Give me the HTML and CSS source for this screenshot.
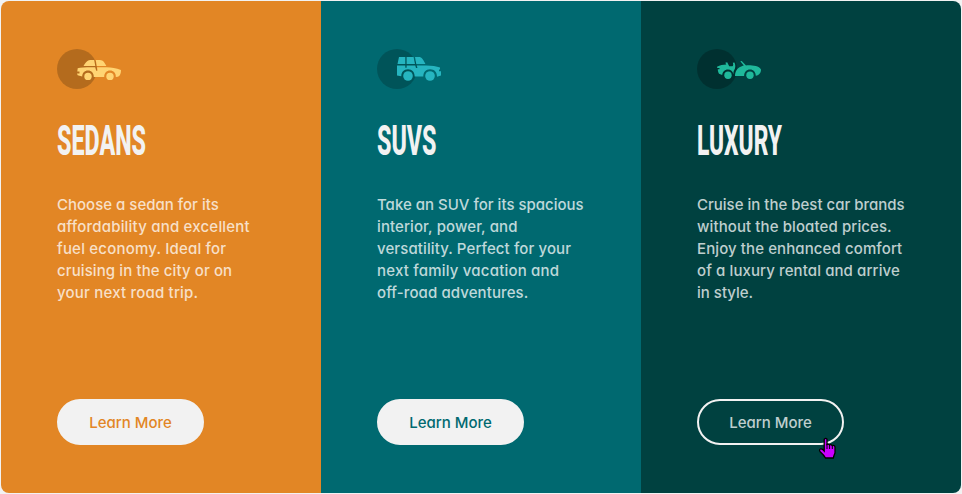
FILE: index.html
```html
<!DOCTYPE html>
<html lang="en">
<head>
<meta charset="utf-8">
<title>Car categories</title>
<link rel="stylesheet" href="styles.css">
</head>
<body>
<main class="cards">
  <section class="card sedans">
    <svg class="icon" width="64" height="40" viewBox="0 0 64 40">
      <circle cx="20" cy="20" r="20" fill="#000" fill-opacity=".2"/>
      <g fill="#ffd473">
        <path d="M26.5 17C28 14.5 30 11.8 31.8 11.3C33.7 10.8 36 11 37.2 11.1L38.3 17ZM38.8 11H43C46.2 11.1 47.7 13.6 49.3 17H39.7Z"/>
        <path d="M20.7 19.3C24 18.4 30 18.2 38.2 18.3L39.2 21.8H40.5L40 18.3H49.7C54.6 18.6 59 19 64 21C64 24 63.4 26.7 61 27.7L58.8 28C59 23.9 56.5 21.5 53 21.5S47.2 24 47.2 28H36.8C36.8 24 34.5 21.5 31 21.5S25.2 24 25.2 27.6L20.7 26.3L20 24.4H22.5V22.4H20.3Z"/>
        <circle cx="31" cy="27.4" r="3.7"/><circle cx="53" cy="27.4" r="3.7"/>
      </g>
    </svg>
    <h2 class="title"><svg width="91" height="48"><text x="0" y="39" textLength="89" lengthAdjust="spacingAndGlyphs">SEDANS</text></svg></h2>
    <p class="copy"><span class="tight">Choose a sedan for its</span> <span class="loose">affordability and excellent</span> <span class="loose">fuel economy. Ideal for</span> <span>cruising in the city or on</span> <span class="loose">your next road trip.</span></p>
    <a class="button">Learn More</a>
  </section>
  <section class="card suvs">
    <svg class="icon" width="64" height="40" viewBox="0 0 64 40">
      <circle cx="20" cy="20" r="20" fill="#000" fill-opacity=".2"/>
      <g fill="#26b5c0">
        <path d="M22 8H28.3V15H20.5ZM29.6 8H36.6L38 15H29.6ZM38 8H42.5C45 8.2 47 12 48.4 15H39.3Z"/>
        <path d="M20 16.4H28.3V18.7H29.6V16.4H38.3L39 19H40.5L39.8 16.4H49C55 16.5 59.5 17.2 63 18.6V20.5H62V22.2H64V26.5L60 27.8C60 23 57.3 20.3 53 20.3S46.4 23.3 46.3 27.5H37.7C37.6 23.3 35.3 20.3 31 20.3S24.3 23.3 24.3 27.3L20 26.5Z"/>
        <circle cx="31" cy="27" r="4.8"/><circle cx="53" cy="27" r="4.8"/>
      </g>
    </svg>
    <h2 class="title"><svg width="91" height="48"><text x="0" y="39" textLength="59.5" lengthAdjust="spacingAndGlyphs">SUVS</text></svg></h2>
    <p class="copy"><span class="tight">Take an SUV for its spacious</span> <span>interior, power, and</span> <span>versatility. Perfect for your</span> <span class="loose">next family vacation and</span> <span>off-road adventures.</span></p>
    <a class="button">Learn More</a>
  </section>
  <section class="card luxury">
    <svg class="icon" width="64" height="40" viewBox="0 0 64 40">
      <circle cx="20" cy="20" r="20" fill="#000" fill-opacity=".25"/>
      <g fill="#1fb99b">
        <path d="M20 17.8C23 16.3 26 15.6 29.3 15.5L28.3 13.8L30.2 13.3L32.2 17.2H35.5C36.6 16.4 36.2 14.8 35.8 13.7L37.5 13.5C38.8 16.7 38.5 19 37 21.6C36.2 23 36.5 24 36.5 25.3C35.7 22.5 33.8 20.5 31 20.5C27.4 20.5 25.5 23 25.2 26L22 24.7C21.1 23 20.8 21.3 20.8 20.2H22.5V19H20.3Z"/>
        <path d="M43.3 12.3L44.7 12L49 16.4C55 16.2 61.8 16.7 64 20.5C64 24 62.5 25.8 58.8 26.8C58.7 23 56.5 20.5 53 20.5S47.2 23 47.1 27H38C38 23.3 39.7 19.6 42.5 18.2C44 17.4 45.7 16.9 46.8 16.5Z"/>
        <circle cx="31" cy="26.3" r="3.7"/><circle cx="53" cy="26.3" r="3.7"/>
      </g>
    </svg>
    <h2 class="title"><svg width="91" height="48"><text x="0" y="39" textLength="85" lengthAdjust="spacingAndGlyphs">LUXURY</text></svg></h2>
    <p class="copy"><span class="tight">Cruise in the best car brands</span> <span>without the bloated prices.</span> <span>Enjoy the enhanced comfort</span> <span>of a luxury rental and arrive</span> <span class="tight">in style.</span></p>
    <a class="button active">Learn More
      <svg class="cursor" width="20" height="24" viewBox="0 0 20 24"><path d="M6.2 2.2Q7.7 .5 9 2.2V7.4Q10.5 6.5 11.5 8Q13 7 14.2 8.6Q16.7 8 17 10V16Q16 18 15.3 21H7.5Q5.8 18 2.4 15Q.7 12.8 2.3 12Q4 11.3 6.2 14Z" fill="#c800ff" stroke="#000" stroke-width="1.3"/><path d="M9 7V12M11.6 8V12M14.3 9V12" stroke="#000" fill="none"/></svg>
    </a>
  </section>
</main>
</body>
</html>
```
FILE: styles.css
```css
* { box-sizing: border-box; }
body {
  margin: 0;
  padding: 1px;
  background: #f2f2f2;
  font-family: Inter, "Liberation Sans", sans-serif;
}
.cards {
  display: grid;
  grid-template-columns: repeat(3, minmax(0, 1fr));
  height: 492px;
  border-radius: 8px;
  overflow: hidden;
}
.card {
  display: flex;
  flex-direction: column;
  align-items: flex-start;
  padding: 48px 56px;
}
.sedans { background: #e28625; color: #e28625; }
.suvs { background: #006970; color: #006970; }
.luxury { background: #004140; color: #004140; }
.icon { display: block; flex: none; }
.title { margin: 27px 0 0; height: 48px; }
.title svg { display: block; overflow: visible; }
.title text {
  fill: #f2f2f2;
  font: 800 42px Roboto, sans-serif;
}
.copy {
  margin: 30px 0 0;
  font-size: 15px;
  font-weight: 450;
  line-height: 22px;
  letter-spacing: .1px;
  color: rgba(255, 255, 255, .75);
  font-feature-settings: "cv11";
  white-space: nowrap;
}
.copy span { display: block; width: max-content; }
.copy .loose { letter-spacing: .2px; }
.copy .tight { letter-spacing: 0; }
.button {
  position: relative;
  display: flex;
  align-items: center;
  justify-content: center;
  width: 147px;
  height: 46px;
  margin-top: auto;
  border: 2px solid #f2f2f2;
  border-radius: 23px;
  background: #f2f2f2;
  font-size: 15px;
  font-weight: 450;
  font-feature-settings: "cv11";
}
.active { background: transparent; color: rgba(255, 255, 255, .75); }
.cursor { position: absolute; left: 119px; top: 36px; }
```
